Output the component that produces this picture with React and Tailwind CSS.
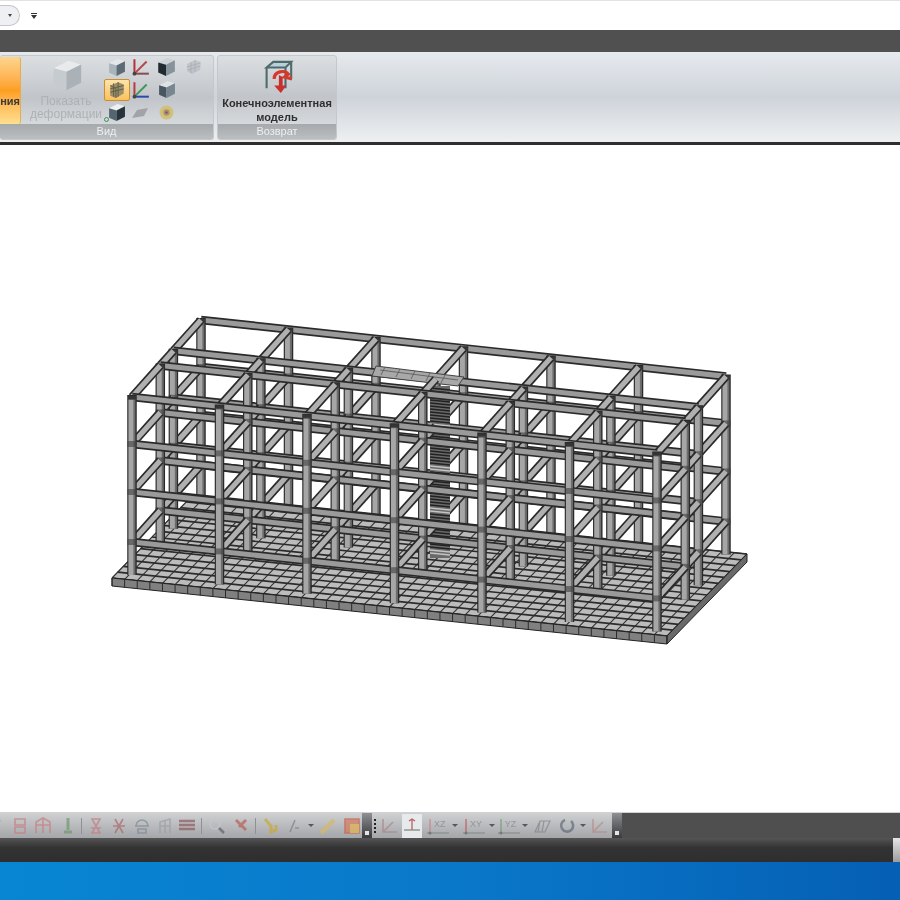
import React from 'react';

const FONT = "font-['Liberation_Sans',Arial,sans-serif]";

// --- frame model, parallel projection, page coordinates ---
const rows = [1, 0.6, 0.41, 0];
const levels = [0, 47, 95, 145];
const COLS = [0, 1, 2, 3, 4, 5, 6];
const pt = (i, t, h = 0) => [132 + 87.5 * i + 69 * t, 397 + 9.4 * i - 77 * t + h];

function Bar({ a, b, w = 8.5, fill = '#9c9c9c' }) {
    return (
        <g strokeLinecap="butt">
            <line x1={a[0]} y1={a[1]} x2={b[0]} y2={b[1]} stroke="#2a2a2a" strokeWidth={w} />
            <line x1={a[0]} y1={a[1]} x2={b[0]} y2={b[1]} stroke={fill} strokeWidth={w - 3.4} />
        </g>
    );
}

function Column({ i, t }) {
    const a = pt(i, t, -2);
    const b = pt(i, t, 178);
    const top = pt(i, t, 0);
    return (
        <g>
            <line x1={a[0]} y1={a[1]} x2={b[0]} y2={b[1]} stroke="#2a2a2a" strokeWidth="9.5" />
            <line x1={a[0] - 0.4} y1={a[1] + 4} x2={b[0] - 0.4} y2={b[1]} stroke="#a6a6a6" strokeWidth="6.4" />
            <line x1={a[0] + 2.4} y1={a[1] + 4} x2={b[0] + 2.4} y2={b[1]} stroke="#6c6c6c" strokeWidth="2" />
            <rect x={top[0] - 4} y={top[1] - 1} width="8" height="4" fill="#3a3a3a" opacity="0.7" />
            {levels.slice(1).map((h) => {
                const p = pt(i, t, h);
                return <rect key={h} x={p[0] - 4.7} y={p[1] - 3} width="9.4" height="6" fill="#3f3f3f" opacity="0.6" />;
            })}
        </g>
    );
}

function Slab() {
    const L = [112, 578];
    const F = [667, 636];
    const R = [747, 554];
    const B = [192, 496];
    const mix = (p, q, k) => [p[0] + (q[0] - p[0]) * k, p[1] + (q[1] - p[1]) * k];
    const nU = 44;
    const nV = 14;
    const us = Array.from({ length: nU + 1 }, (_, k) => k / nU);
    const vs = Array.from({ length: nV + 1 }, (_, k) => k / nV);
    const D = 8;
    return (
        <g>
            <polygon points={`${L} ${F} ${R} ${B}`} fill="#bcbcbc" stroke="#2a2a2a" strokeWidth="1" />
            {us.map((k) => {
                const a = mix(L, F, k);
                const b = mix(B, R, k);
                return <line key={k} x1={a[0]} y1={a[1]} x2={b[0]} y2={b[1]} stroke="#333" strokeWidth="1.1" />;
            })}
            {vs.map((k) => {
                const a = mix(L, B, k);
                const b = mix(F, R, k);
                return <line key={k} x1={a[0]} y1={a[1]} x2={b[0]} y2={b[1]} stroke="#2b2b2b" strokeWidth="1.7" />;
            })}
            <polygon points={`${L} ${F} ${F[0]},${F[1] + D} ${L[0]},${L[1] + D}`} fill="#808080" stroke="#222" strokeWidth="1" />
            <polygon points={`${F} ${R} ${R[0]},${R[1] + D} ${F[0]},${F[1] + D}`} fill="#6a6a6a" stroke="#222" strokeWidth="1" />
            {us.map((k) => {
                const a = mix(L, F, k);
                return <line key={k} x1={a[0]} y1={a[1]} x2={a[0]} y2={a[1] + D} stroke="#2a2a2a" strokeWidth="1" />;
            })}
        </g>
    );
}

function Stairs() {
    const ys = Array.from({ length: 56 }, (_, k) => 388 + k * 3);
    return (
        <g>
            <rect x="430" y="386" width="20" height="172" fill="#6a6a6a" />
            {ys.map((y, k) => (
                <line key={k} x1="430" y1={y} x2="450" y2={y + 2} stroke={k % 14 > 11 ? '#c4c4c4' : '#222'} strokeWidth="1.4" />
            ))}
            <polygon points="376,366 464,377 458,386 372,376" fill="#a8a8a8" stroke="#444" strokeWidth="1" />
            <path d="M380 370l78 10M385 367l-4 8M400 369l-4 8M415 371l-4 8M430 373l-4 8M445 375l-4 8" stroke="#555" strokeWidth="0.8" />
        </g>
    );
}

function Frame() {
    return (
        <svg width="900" height="667" viewBox="0 145 900 667" className="block blur-[0.4px]">
            <Slab />
            {rows.map((t, r) => (
                <g key={t}>
                    {r === 2 && <Stairs />}
                    {r > 0 && levels.flatMap((h) =>
                        COLS.map((i) => (
                            <Bar key={`${i}-${h}`} a={pt(i, rows[r - 1], h)} b={pt(i, t, h)} w={8.5} fill="#b0b0b0" />
                        ))
                    )}
                    {levels.map((h) => (
                        <Bar key={h} a={pt(0, t, h)} b={pt(6, t, h)} w={8.5} fill="#9a9a9a" />
                    ))}
                    {COLS.map((i) => <Column key={i} i={i} t={t} />)}
                </g>
            ))}
        </svg>
    );
}

// --- ribbon icons ---
function Cube({ size = 18, top = '#e3e7ea', left = '#a8b4bc', right = '#5d6b75', className = '' }) {
    return (
        <svg width={size} height={size} viewBox="0 0 18 18" className={className}>
            <polygon points="2,5 10,1 17,3 9,7" fill={top} />
            <polygon points="2,5 9,7 9,17 2,14" fill={left} />
            <polygon points="9,7 17,3 17,13 9,17" fill={right} />
        </svg>
    );
}

function Axes({ a = '#c0392b', b = '#3f8f4f', c = '#2c3fa8' }) {
    return (
        <svg width="20" height="20" viewBox="0 0 18 18">
            <path d="M4 15V2" stroke={c} strokeWidth="1.8" fill="none" />
            <path d="M4 15L15 4" stroke={a} strokeWidth="1.8" fill="none" />
            <path d="M4 15H17" stroke={b} strokeWidth="1.8" fill="none" />
            <circle cx="4" cy="15" r="1.7" fill="#444" />
        </svg>
    );
}

function MeshCube() {
    return (
        <svg width="18" height="18" viewBox="0 0 16 16">
            <polygon points="2,4 9,1 14,3 14,11 7,15 2,13" fill="#9b8f6a" />
            <path d="M2 7l12-3M2 10l12-3M5 2v12M9 1v13M2 4l5 3v8" stroke="#5f5a45" strokeWidth="0.8" fill="none" />
        </svg>
    );
}

function FadedMesh() {
    return (
        <svg width="18" height="18" viewBox="0 0 18 18" className="opacity-50">
            <polygon points="2,6 10,2 16,4 15,12 7,16 2,13" fill="#aab2b8" />
            <path d="M2 9l13-4M3 12l12-4M6 4v11M10 2v12" stroke="#7d8890" strokeWidth="0.9" fill="none" />
        </svg>
    );
}

function ReturnIcon() {
    return (
        <svg width="34" height="34" viewBox="0 0 36 36">
            <polygon points="7,8 14,2 33,2 27,8" fill="#b8d0d6" />
            <path d="M7 8L14 2H33L27 8ZM7 8H27V30M7 8V30M33 2V18" fill="none" stroke="#4d6a6c" strokeWidth="2.2" />
            <path d="M15 20C15 12 26 10 30 15L26 18L34 20" fill="none" stroke="#d33a2c" strokeWidth="3.4" />
            <path d="M20 16V27H15L22 35L28 27H24V18Z" fill="#c9302c" />
        </svg>
    );
}

function RibbonGroup({ w, label, children, cut }) {
    return (
        <div className={`${w} ${cut ? 'border-l-0' : ''} h-[85px] rounded-[3px] border border-[#c5c8cb] flex flex-col overflow-hidden bg-gradient-to-b from-[#dcdfe2] via-[#c1c5c9] to-[#e2e4e7]`}>
            <div className="flex-1 flex min-h-0">{children}</div>
            <div className="h-[15px] shrink-0 bg-gradient-to-b from-[#a6a9ac] to-[#bcbfc2] text-[11px] leading-[15px] text-center text-[#eceef0] blur-[0.3px]">{label}</div>
        </div>
    );
}

function Ribbon() {
    return (
        <div className={`${FONT} h-[90px] shrink-0 flex gap-[3px] pt-[3px] bg-gradient-to-b from-[#e6eaef] via-[#ced3d9] to-[#eef0f2]`}>
            <RibbonGroup w="w-[214px]" label="Вид" cut>
                <div className="w-[21px] h-[67px] mt-[1px] shrink-0 rounded-r-[3px] border-r border-[#e0b050] bg-gradient-to-b from-[#fdd58c] via-[#fd9f1f] to-[#ffe08e] flex items-end justify-end pb-[15px] text-[11px] font-bold text-[#3a3a3a] overflow-hidden blur-[0.3px]">ния</div>
                <div className="ml-[5px] w-[80px] shrink-0 flex flex-col items-center pt-[3px] text-[#aeb1b4] text-[12px] leading-[13px] text-center blur-[0.3px]">
                    <Cube size={33} top="#e8eaec" left="#c5cbcf" right="#aab2b8" />
                    <div className="mt-[3px]">Показать</div>
                    <div>деформации</div>
                </div>
                <div className="grid grid-cols-[21px_26px_26px_30px] grid-rows-[22px_23px_23px] items-center justify-items-center blur-[0.3px]">
                    <Cube size={19} />
                    <Axes a="#b5484a" b="#8c4a50" c="#b03438" />
                    <Cube size={20} top="#ccd2d6" left="#202a30" right="#86939b" />
                    <FadedMesh />
                    <div className="w-[26px] h-[22px] rounded-[2px] border border-[#c88f35] bg-gradient-to-b from-[#fde4a8] to-[#fbc05a] flex items-center justify-center"><MeshCube /></div>
                    <Axes a="#3f9a55" b="#2a49a8" c="#bb3a3a" />
                    <Cube size={19} top="#dde2e5" left="#475660" right="#778690" />
                    <div />
                    <div className="relative">
                        <Cube size={19} top="#eef0f2" left="#556570" right="#27343c" />
                        <div className="absolute left-[-3px] bottom-[0px] w-[5px] h-[5px] rounded-full border border-[#3f8f4f]" />
                    </div>
                    <svg width="18" height="12" viewBox="0 0 18 12"><polygon points="1,11 6,3 17,1 13,9" fill="#a0a4a8" /></svg>
                    <svg width="17" height="17" viewBox="0 0 16 16"><circle cx="8" cy="8" r="6.5" fill="#cfc07a" /><circle cx="8" cy="8" r="3" fill="#b9925a" /><circle cx="8" cy="8" r="1.2" fill="#5a5fb0" /></svg>
                    <div />
                </div>
            </RibbonGroup>
            <RibbonGroup w="w-[120px]" label="Возврат">
                <div className="flex-1 flex flex-col items-center pt-[4px] text-[11px] leading-[14px] font-bold text-[#2f2f2f] text-center blur-[0.25px]">
                    <ReturnIcon />
                    <div className="mt-[2px] whitespace-nowrap">Конечноэлементная</div>
                    <div>модель</div>
                </div>
            </RibbonGroup>
        </div>
    );
}

// --- bottom toolbar icons: faint, washed out glyphs ---
function Tool({ w = 'w-[23px]', color = '#c77c80', children }) {
    return (
        <div className={`${w} h-[18px] shrink-0 flex items-center justify-center`}>
            <svg width="20" height="20" viewBox="0 0 20 20" fill="none" stroke={color} strokeWidth="1.6" className="overflow-visible opacity-70">{children}</svg>
        </div>
    );
}

const Sep = () => <div className="w-[1px] h-[16px] shrink-0 bg-[#8d9094]" />;
const Arrow = () => <div className="w-0 h-0 shrink-0 border-x-[3px] border-x-transparent border-t-[3px] border-t-[#55585c]" />;

const gripClass = 'w-[10px] h-[25px] shrink-0 bg-gradient-to-b from-[#8e9094] to-[#3a3b3e] flex flex-col justify-end items-center pb-[3px]';

function Axis3({ label, a = '#c77c80' }) {
    return (
        <div className="w-[27px] h-[20px] shrink-0 flex items-center relative opacity-75">
            <svg width="27" height="20" viewBox="0 0 27 20" fill="none" strokeWidth="1.3" className="shrink-0">
                <path d="M6 17V3" stroke={a} />
                <path d="M3 17H25" stroke="#7f8a80" />
                <circle cx="6" cy="17" r="1.5" fill="#666" />
            </svg>
            <span className="absolute left-[10px] top-[3px] text-[9px] leading-[11px] text-[#83888c]">{label}</span>
        </div>
    );
}

function BottomBar() {
    return (
        <div className="h-[25px] shrink-0 flex bg-[#4f4f4f]">
            <div className="w-[362px] shrink-0 flex items-center bg-gradient-to-b from-[#cfd0d2] to-[#a4a6a9] blur-[0.5px]">
                <Tool w="w-[9px]" color="#b4b0a6"><path d="M-4 16L6 4" /></Tool>
                <Tool w="w-[22px]"><path d="M5 3h10v6H5zM5 11h10v6H5z" /></Tool>
                <Tool w="w-[24px]"><path d="M3 17V6l7-4 7 4v11M3 9h14M10 2v15" /></Tool>
                <Tool w="w-[25px]" color="#6f9a6c"><path d="M10 2v12M6 16h8" strokeWidth="3" /></Tool>
                <div className="w-[1px]" />
                <Sep />
                <Tool w="w-[27px]"><path d="M5 3h10M5 17h10M6 3l8 14M14 3L6 17M5 12h10" /></Tool>
                <Tool w="w-[20px]" color="#a9666a"><path d="M6 3l8 14M14 3L6 17M4 10h12" /></Tool>
                <Tool w="w-[25px]" color="#7d8a92"><path d="M4 10a6 6 0 0 1 12 0M3 10h14M6 13h8v4H6z" /></Tool>
                <Tool w="w-[24px]" color="#9aa0a3"><path d="M4 17V6l10-3v14M4 10h10M9 4v13" /></Tool>
                <Tool w="w-[18px]" color="#8c5a5e"><path d="M2 5h16M2 9h16M2 13h16" strokeWidth="2.4" /></Tool>
                <div className="w-[5px]" />
                <Sep />
                <Tool w="w-[30px]" color="#5f6469"><circle cx="8" cy="8" r="5" stroke="#c4c9ce" /><path d="M12 12l5 5" strokeWidth="2.6" /></Tool>
                <Tool w="w-[18px]" color="#bb5c56"><path d="M5 4l10 10M15 4L8 11" strokeWidth="3" /></Tool>
                <div className="w-[5px]" />
                <Sep />
                <Tool w="w-[30px]" color="#c9a936"><path d="M4 3l6 7v6l5-2V9" strokeWidth="3" /></Tool>
                <Tool w="w-[18px]" color="#7c8086"><path d="M5 16L10 4M10 12h4" /></Tool>
                <div className="w-[4px]" />
                <Arrow />
                <Tool w="w-[28px]" color="#d8b864"><path d="M3 17L16 4" strokeWidth="4" /></Tool>
                <Tool w="w-[20px]" color="#c9604a"><path d="M3 3h14v14H3z" fill="#d47a5e" /><path d="M8 8h9v9H8z" fill="#e3b24c" stroke="none" /></Tool>
            </div>
            <div className={gripClass}><div className="w-[4px] h-[4px] bg-[#e4e4e4]" /></div>
            <div className="w-[240px] shrink-0 flex items-center bg-gradient-to-b from-[#cfd0d2] to-[#a4a6a9] blur-[0.5px]">
                <div className="w-[8px] flex flex-col gap-[2px] items-center"><i className="w-[2px] h-[2px] bg-[#222]" /><i className="w-[2px] h-[2px] bg-[#222]" /><i className="w-[2px] h-[2px] bg-[#222]" /><i className="w-[2px] h-[2px] bg-[#222]" /></div>
                <Tool w="w-[22px]" color="#a98589"><path d="M4 3v13h14M4 16L14 6" /></Tool>
                <div className="w-[20px] h-[24px] shrink-0 ml-[2px] bg-[#e7eaec] flex items-center justify-center">
                    <svg width="18" height="18" viewBox="0 0 18 18" fill="none" stroke="#b8605f" strokeWidth="1.3"><path d="M9 2v11M6 4l3-2 3 2" /><path d="M1 13h16" stroke="#7f8a80" /></svg>
                </div>
                <div className="w-[2px]" />
                <Axis3 label="XZ" />
                <div className="w-[2px]" />
                <Arrow />
                <div className="w-[2px]" />
                <Axis3 label="XY" a="#c04a4a" />
                <div className="w-[2px]" />
                <Arrow />
                <Axis3 label="YZ" a="#6b9a6c" />
                <Arrow />
                <div className="w-[3px]" />
                <Tool w="w-[24px]" color="#7d8388"><path d="M3 16L8 5h10l-5 11zM8 5L6 16M12 5l-2 11" strokeWidth="1.2" /></Tool>
                <Tool w="w-[26px]" color="#5f6c7a"><path d="M14 5a6 6 0 1 1-6-1" strokeWidth="2.6" /></Tool>
                <Arrow />
                <Tool w="w-[26px]" color="#b68b88"><path d="M4 3v13h14M4 16L14 6" /></Tool>
            </div>
            <div className={gripClass}><div className="w-[4px] h-[4px] bg-[#e4e4e4]" /></div>
        </div>
    );
}

export default function App() {
    return (
        <div className={`${FONT} w-[900px] h-[900px] overflow-hidden bg-white flex flex-col`}>
            {/* quick access strip */}
            <div className="h-[30px] shrink-0 flex items-center bg-white border-t border-[#e2e2e2]">
                <div className="w-[20px] h-[21px] shrink-0 rounded-r-full border border-[#c3c7cc] border-l-0 bg-[#eef0f3] flex items-center justify-center">
                    <div className="w-0 h-0 border-x-[2.5px] border-x-transparent border-t-[3px] border-t-[#444]" />
                </div>
                <div className="ml-[11px] flex flex-col items-center gap-[1px]">
                    <div className="w-[6px] h-[1px] bg-[#333]" />
                    <div className="w-0 h-0 border-x-[3px] border-x-transparent border-t-[4px] border-t-[#333]" />
                </div>
            </div>
            <div className="h-[22px] shrink-0 bg-[#505050]" />
            <Ribbon />
            <div className="h-[3px] shrink-0 bg-[#2f2f2f]" />
            <Frame />
            <div className="h-[1px] shrink-0 bg-[#d2d2d2]" />
            <BottomBar />
            <div className="h-[24px] shrink-0 flex bg-gradient-to-b from-[#555] via-[#333] via-40% to-[#2e2e2e]">
                <div className="flex-1" />
                <div className="w-[7px] bg-gradient-to-b from-[#e6e6e6] to-[#9c9c9c]" />
            </div>
            <div className="flex-1 bg-gradient-to-r from-[#0786d3] via-[#0a78c9] to-[#055fb4]" />
        </div>
    );
}
